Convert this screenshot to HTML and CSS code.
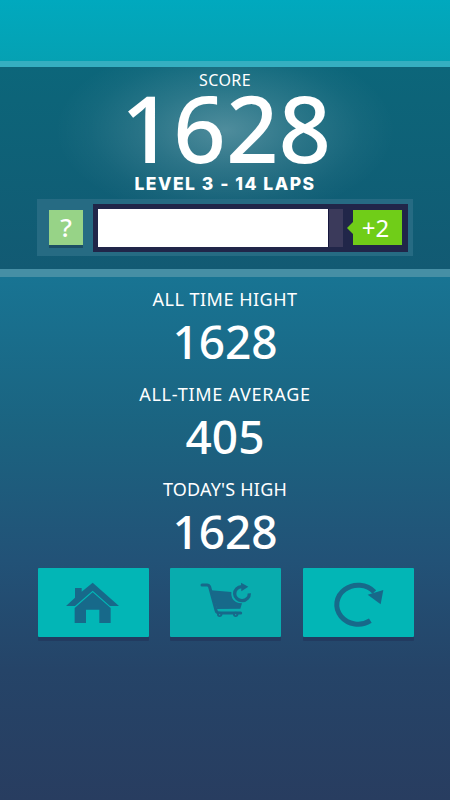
FILE: index.html
```
<!DOCTYPE html>
<html lang="en">
<head>
<meta charset="UTF-8">
<title>Score</title>
<link rel="stylesheet" href="styles.css">
</head>
<body>
<div class="game">
	<div class="top"></div>
	<div class="panel">
		<p class="score-label">SCORE</p>
		<p class="score">1628</p>
		<p class="level">LEVEL 3 - 14 LAPS</p>
		<div class="progress">
			<div class="help">?</div>
			<div class="track">
				<div class="bar"><div class="fill"></div></div>
				<div class="bonus">+2</div>
			</div>
		</div>
	</div>
	<div class="stats">
		<p class="label high">ALL TIME HIGHT</p>
		<p class="num">1628</p>
		<p class="label average">ALL-TIME AVERAGE</p>
		<p class="num">405</p>
		<p class="label today">TODAY'S HIGH</p>
		<p class="num">1628</p>
	</div>
	<div class="buttons">
		<div class="btn">
			<svg viewBox="22 24 333 207">
				<path d="M106 138L133 113V84H153V95L186 68L265 138H238L186 92L133 138Z"/>
				<path d="M186 97L240 144V189H206V149H166V189H132V144Z"/>
			</svg>
		</div>
		<div class="btn btn-cart">
			<svg viewBox="30 24 333 207">
				<path class="line" d="M126 75H141Q147 75 149 81L168 151Q170 159 178 159H242" stroke-width="9"/>
				<path d="M153 91L214 96Q212 118 228 126Q235 130 246 130L241 146L171 147Z"/>
				<circle cx="179" cy="163" r="8"/>
				<circle cx="227" cy="163" r="8"/>
				<circle class="hub" cx="179" cy="164" r="2"/>
				<circle class="hub" cx="227" cy="164" r="2"/>
				<path class="line arc" d="M245 80A22 21 0 1 0 268 100" stroke-width="10"/>
				<path d="M243 68L265 80L244 94Z"/>
			</svg>
		</div>
		<div class="btn">
			<svg viewBox="24 24 333 207">
				<path class="line arc" d="M226 182A64 58.5 0 1 1 238 96" stroke-width="15"/>
				<path d="M218 104L265 90L257 133Z"/>
			</svg>
		</div>
	</div>
</div>
</body>
</html>
```

FILE: styles.css
```
* {margin:0; padding:0; box-sizing:border-box;}
body {font-family:"Noto Sans", "Open Sans", sans-serif; color:#fff;}
.game {width:450px; height:800px; overflow:hidden; text-align:center; background:linear-gradient(#187493 277px, #1b6380 430px, #225277 560px, #254468 670px, #283d60 800px);}
.top {height:61px; background:linear-gradient(#00a9be, #05a1b3);}

.panel {height:216px; border-top:6px solid #35afc1; border-bottom:8px solid #468fa5; padding:0 37px; background:radial-gradient(ellipse 170px 90px at 225px 63px, rgba(255,255,255,.27), rgba(255,255,255,.12) 45%, rgba(255,255,255,.03) 80%, rgba(255,255,255,0)), linear-gradient(#0c667a, #125a73);}
.score-label {height:22px; line-height:26px; font-size:16px; letter-spacing:.4px;}
.score {height:80px; line-height:78px; padding-left:2px; font-size:92px; font-weight:500;}
.level {height:30px; line-height:30px; font-family:Inter, sans-serif; font-size:17.5px; font-weight:800; letter-spacing:1.5px;}
.progress {display:flex; align-items:center; width:376px; height:57px; padding-left:12px; background:#266b83;}
.help {width:34px; height:35px; line-height:35px; margin-right:10px; font-size:26px; font-weight:500; background:#97d387; box-shadow:0 3px 0 #1b4e65;}
.track {display:flex; align-items:center; width:315px; height:48px; padding-left:5px; background:#212649;}
.bar {width:245px; height:38px; background:#3b3a5b;}
.fill {width:231px; height:38px; background:#fff; border-right:1px solid #16163c;}
.bonus {position:relative; width:49px; height:35px; line-height:35px; margin-left:10px; padding-right:4px; font-size:24px; background:#70cd18;}
.bonus:before {content:""; position:absolute; left:-6px; top:12px; border:6px solid transparent; border-left:0; border-right-color:#70cd18;}

.stats {height:291px; padding-top:11px;}
.label {height:22px; line-height:22px; font-size:18px;}
.high {letter-spacing:.5px;}
.average {letter-spacing:.75px;}
.today {letter-spacing:.2px;}
.num {height:73px; line-height:63px; font-size:46px; font-weight:500;}

.buttons {display:flex; gap:21.5px; padding-left:37.5px;}
.btn {width:111px; height:69px; border-radius:1px; background:#02b6b6; box-shadow:0 4px 0 #223b60;}
.btn-cart {background:#08acae;}
.btn svg {display:block; width:111px; height:69px; fill:#17698a;}
.btn .line {fill:none; stroke:#17698a; stroke-linecap:round; stroke-linejoin:round;}
.btn .arc {stroke-linecap:butt;}
.btn .hub {fill:#08acae;}
```
